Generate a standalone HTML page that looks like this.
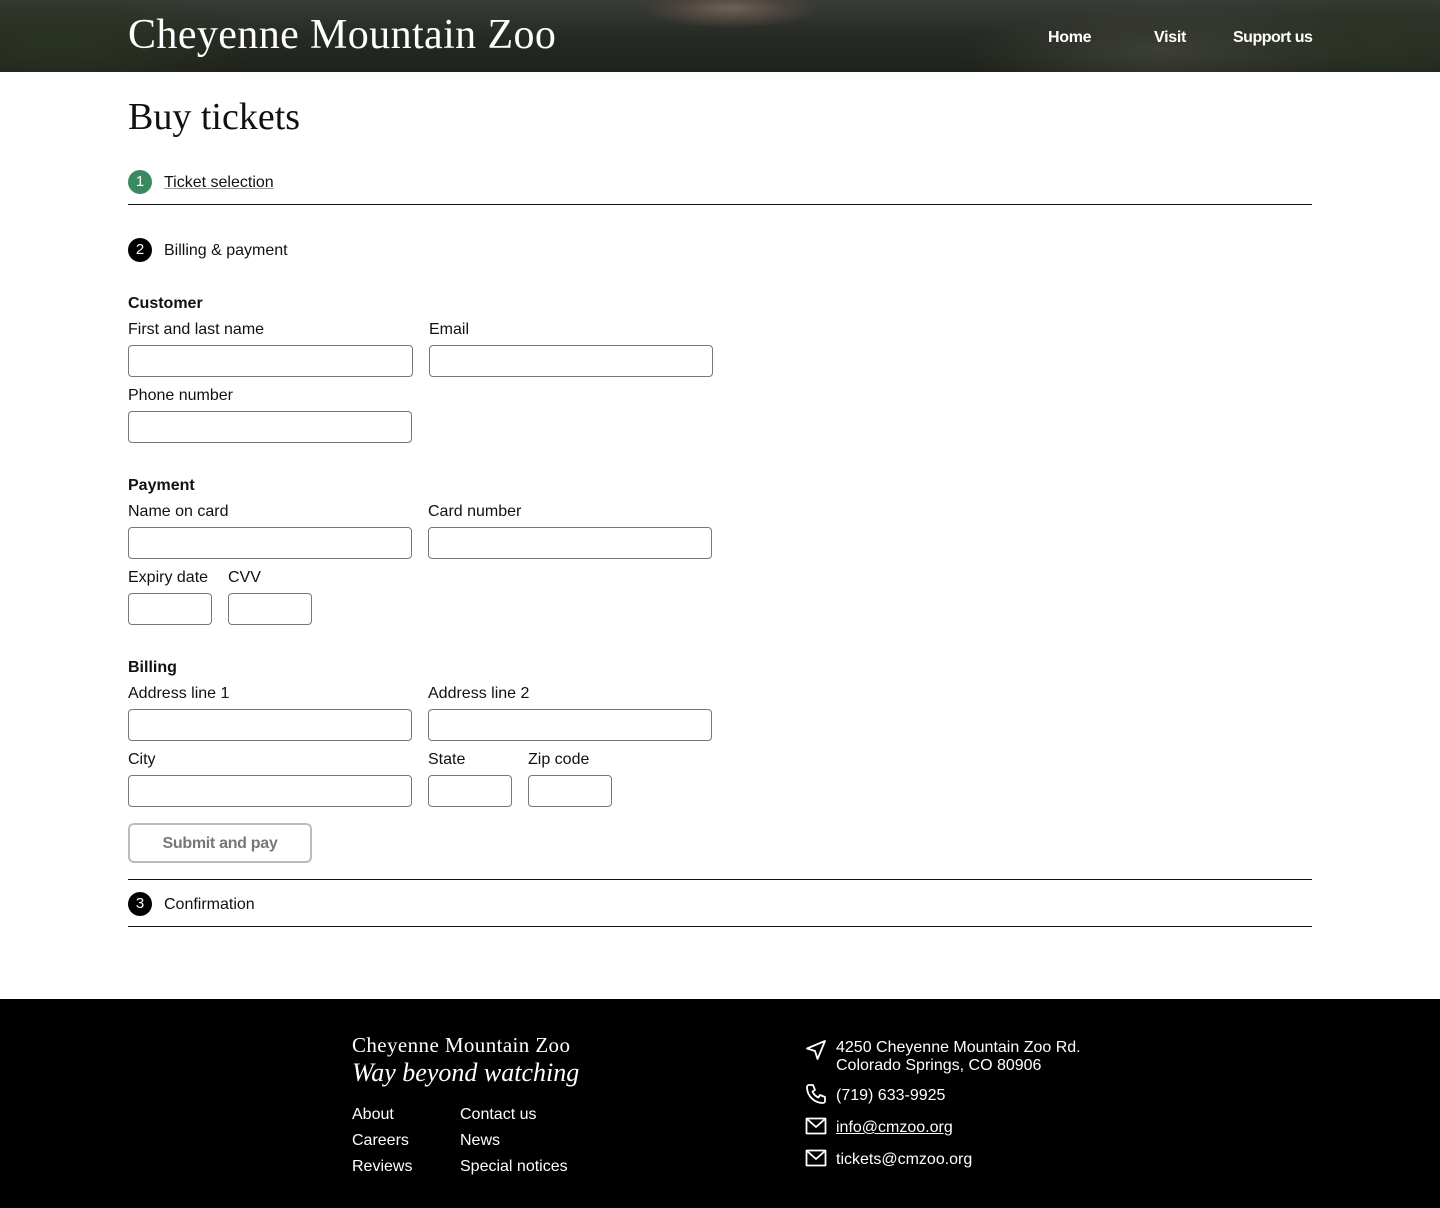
<!DOCTYPE html>
<html><head><meta charset="utf-8">
<style>
*{margin:0;padding:0;box-sizing:border-box}
body{width:1440px;height:1208px;position:relative;background:#fff;font-family:"Liberation Sans",Arial,sans-serif;color:#111;overflow:hidden}
.a{position:absolute;white-space:nowrap}
.t{font-size:16px;line-height:20px;margin-top:2px}
.b{font-weight:bold}
.in{position:absolute;height:32px;border:1px solid #777;border-radius:4px;background:#fff}
.hr{position:absolute;left:128px;width:1184px;height:1px;background:#111}
.c{position:absolute;width:24px;height:24px;border-radius:50%;color:#fff;font-size:15px;line-height:24px;text-align:center;background:#000;margin-top:1px}
.serif{font-family:"Liberation Serif","DejaVu Serif",serif}
#hd{position:absolute;left:0;top:0;width:1440px;height:72px;background:
radial-gradient(ellipse 90px 20px at 730px 8px,#6e6258 0%,#4a423c 60%,transparent 100%),
radial-gradient(ellipse 200px 60px at 60px 40px,#2b3322,transparent),
radial-gradient(ellipse 200px 50px at 1160px 50px,#3c3f34,transparent),
radial-gradient(ellipse 200px 60px at 1380px 40px,#2c3425,transparent),
linear-gradient(180deg,#3a3c38 0%,#262a24 50%,#1e221c 100%)}
.f{color:#fff}
</style></head><body>
<div id="hd"></div>
<div class="a serif" style="left:128px;top:10px;font-size:42px;line-height:50px;color:#fff;letter-spacing:0.4px">Cheyenne Mountain Zoo</div>
<div class="a t b" style="left:1048px;top:26px;color:#fff;letter-spacing:-0.3px">Home</div>
<div class="a t b" style="left:1154px;top:26px;color:#fff;letter-spacing:-0.3px">Visit</div>
<div class="a t b" style="left:1233px;top:26px;color:#fff;letter-spacing:-0.5px">Support us</div>

<div class="a serif" style="left:128px;top:94px;font-size:38px;line-height:46px">Buy tickets</div>

<div class="c" style="left:128px;top:169px;background:#3a8a60">1</div>
<div class="a t" style="left:164px;top:171px;text-decoration:underline;text-decoration-color:#999">Ticket selection</div>
<div class="hr" style="top:204px"></div>

<div class="c" style="left:128px;top:237px">2</div>
<div class="a t" style="left:164px;top:239px">Billing &amp; payment</div>

<div class="a t b" style="left:128px;top:292px">Customer</div>
<div class="a t" style="left:128px;top:318px">First and last name</div>
<div class="a t" style="left:429px;top:318px">Email</div>
<div class="in" style="left:128px;top:345px;width:285px"></div>
<div class="in" style="left:429px;top:345px;width:284px"></div>
<div class="a t" style="left:128px;top:384px">Phone number</div>
<div class="in" style="left:128px;top:411px;width:284px"></div>

<div class="a t b" style="left:128px;top:474px">Payment</div>
<div class="a t" style="left:128px;top:500px">Name on card</div>
<div class="a t" style="left:428px;top:500px">Card number</div>
<div class="in" style="left:128px;top:527px;width:284px"></div>
<div class="in" style="left:428px;top:527px;width:284px"></div>
<div class="a t" style="left:128px;top:566px">Expiry date</div>
<div class="a t" style="left:228px;top:566px">CVV</div>
<div class="in" style="left:128px;top:593px;width:84px"></div>
<div class="in" style="left:228px;top:593px;width:84px"></div>

<div class="a t b" style="left:128px;top:656px">Billing</div>
<div class="a t" style="left:128px;top:682px">Address line 1</div>
<div class="a t" style="left:428px;top:682px">Address line 2</div>
<div class="in" style="left:128px;top:709px;width:284px"></div>
<div class="in" style="left:428px;top:709px;width:284px"></div>
<div class="a t" style="left:128px;top:748px">City</div>
<div class="a t" style="left:428px;top:748px">State</div>
<div class="a t" style="left:528px;top:748px">Zip code</div>
<div class="in" style="left:128px;top:775px;width:284px"></div>
<div class="in" style="left:428px;top:775px;width:84px"></div>
<div class="in" style="left:528px;top:775px;width:84px"></div>

<div class="a b" style="left:128px;top:823px;width:184px;height:40px;border:2px solid #bbb;border-radius:6px;color:#777;text-align:center;line-height:38px;font-size:16px;letter-spacing:-0.3px">Submit and pay</div>

<div class="hr" style="top:879px"></div>
<div class="c" style="left:128px;top:891px">3</div>
<div class="a t" style="left:164px;top:893px">Confirmation</div>
<div class="hr" style="top:926px"></div>

<div class="a" style="left:0;top:999px;width:1440px;height:209px;background:#000"></div>
<div class="a serif f" style="left:352px;top:1032px;font-size:21px;line-height:26px;letter-spacing:0.4px">Cheyenne Mountain Zoo</div>
<div class="a serif f" style="left:352px;top:1057px;font-size:26px;line-height:32px;font-style:italic">Way beyond watching</div>
<div class="a t f" style="left:352px;top:1103px">About</div>
<div class="a t f" style="left:352px;top:1129px">Careers</div>
<div class="a t f" style="left:352px;top:1155px">Reviews</div>
<div class="a t f" style="left:460px;top:1103px">Contact us</div>
<div class="a t f" style="left:460px;top:1129px">News</div>
<div class="a t f" style="left:460px;top:1155px">Special notices</div>

<svg class="a" style="left:804px;top:1038px" width="24" height="24" viewBox="0 0 24 24" fill="none" stroke="#fff" stroke-width="1.8" stroke-linejoin="round"><path d="M21 3L3 10.5l8 2.5 2.5 8z"/></svg>
<div class="a t f" style="left:836px;top:1037px;line-height:18px">4250 Cheyenne Mountain Zoo Rd.<br>Colorado Springs, CO 80906</div>
<svg class="a" style="left:804px;top:1082px" width="24" height="24" viewBox="0 0 24 24" fill="none" stroke="#fff" stroke-width="1.8" stroke-linejoin="round"><path d="M5 3h4l2 5-2.5 1.5a11 11 0 0 0 6 6L16 13l5 2v4a2 2 0 0 1-2 2A16 16 0 0 1 3 5a2 2 0 0 1 2-2z"/></svg>
<div class="a t f" style="left:836px;top:1084px">(719) 633-9925</div>
<svg class="a" style="left:804px;top:1114px" width="24" height="24" viewBox="0 0 24 24" fill="none" stroke="#fff" stroke-width="1.8" stroke-linejoin="round"><rect x="2.5" y="4.5" width="19" height="15"/><path d="M3 5l9 8 9-8"/></svg>
<div class="a t f" style="left:836px;top:1116px;text-decoration:underline">info@cmzoo.org</div>
<svg class="a" style="left:804px;top:1146px" width="24" height="24" viewBox="0 0 24 24" fill="none" stroke="#fff" stroke-width="1.8" stroke-linejoin="round"><rect x="2.5" y="4.5" width="19" height="15"/><path d="M3 5l9 8 9-8"/></svg>
<div class="a t f" style="left:836px;top:1148px">tickets@cmzoo.org</div>
</body></html>
